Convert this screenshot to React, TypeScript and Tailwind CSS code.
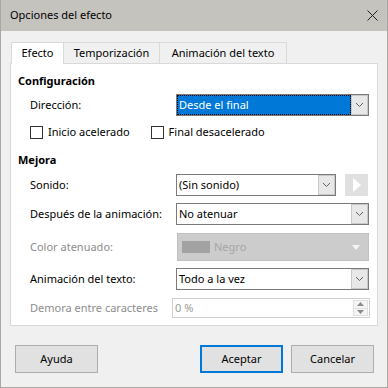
import React from "react";

const font = { fontFamily: '"Noto Sans", "Open Sans", sans-serif' };

const Chevron = () => (
  <svg width="9" height="6" viewBox="0 0 9 6" className="block">
    <path d="M1 1 L4.5 4.5 L8 1" fill="none" stroke="#606060" strokeWidth="1" />
  </svg>
);

const DropButton = () => (
  <div className="flex h-full w-[17px] shrink-0 items-center justify-center border border-[#c8c8c8] bg-[#e8e8e8]">
    <Chevron />
  </div>
);

const Select = ({ value, className = "" }: { value: string; className?: string }) => (
  <div className={`flex h-[22px] items-stretch border border-[#7a7a7a] bg-white ${className}`}>
    <div className="flex flex-1 items-center pl-[2px] text-[11px] text-black">{value}</div>
    <DropButton />
  </div>
);

const Checkbox = ({ label }: { label: string }) => (
  <div className="flex items-center gap-[5px]">
    <div className="h-[13px] w-[13px] border border-[#333] bg-white" />
    <span className="text-[11px] text-black">{label}</span>
  </div>
);

const Row = ({ label, disabled, children }: { label: string; disabled?: boolean; children: React.ReactNode }) => (
  <div className="flex items-center pl-[12px]">
    <div className={`w-[146px] shrink-0 text-[11px] ${disabled ? "text-[#8d8d8d]" : "text-black"}`}>{label}</div>
    {children}
  </div>
);

export default function App() {
  return (
    <div className="flex h-[388px] w-[388px] flex-col border-x border-b border-[#a9a7a4] bg-[#f0f0f0]" style={font}>
      {/* title bar */}
      <div className="flex h-[31px] shrink-0 items-center justify-between bg-[#c5c3be] pl-[9px] pr-[9px]">
        <span className="text-[11px] text-black">Opciones del efecto</span>
        <svg width="11" height="11" viewBox="0 0 11 11">
          <path d="M0.5 0.5 L10.5 10.5 M10.5 0.5 L0.5 10.5" stroke="#222" strokeWidth="1" />
        </svg>
      </div>

      {/* tabs */}
      <div className="ml-[10px] mt-[11px] flex h-[21px] items-stretch">
        <div className="relative z-10 flex h-[22px] w-[53px] items-center justify-center border-x border-t border-[#d9d9d9] bg-white text-[11px] text-black">
          Efecto
        </div>
        <div className="flex w-[96px] items-center justify-center border-r border-t border-[#d9d9d9] bg-[#f0f0f0] text-[11px] text-black">
          Temporización
        </div>
        <div className="flex w-[127px] items-center justify-center border-r border-t border-[#d9d9d9] bg-[#f0f0f0] text-[11px] text-black">
          Animación del texto
        </div>
      </div>

      {/* panel */}
      <div className="ml-[9px] w-[368px] border border-[#d9d9d9] bg-white pb-[7px] pl-[7px] pr-[7px] pt-[9px]">
        <div className="h-4 text-[11px] font-bold leading-4 text-black">Configuración</div>

        <div className="mt-[5px]">
          <Row label="Dirección:">
            <div className="flex h-[22px] w-[193px] items-stretch border border-[#7a7a7a] bg-white">
              <div className="flex flex-1 items-center border border-dotted border-black bg-[#0078d7] pl-px text-[11px] text-white">
                Desde el final
              </div>
              <DropButton />
            </div>
          </Row>
        </div>

        <div className="mt-[8px] flex h-4 items-center gap-[21px] pl-[12px]">
          <Checkbox label="Inicio acelerado" />
          <Checkbox label="Final desacelerado" />
        </div>

        <div className="mt-[12px] h-4 text-[11px] font-bold leading-4 text-black">Mejora</div>

        <div className="mt-[6px]">
          <Row label="Sonido:">
            <Select value="(Sin sonido)" className="w-[160px]" />
            <div className="ml-[9px] flex h-[22px] w-[23px] items-center justify-center bg-[#e0e0e0]">
              <svg width="9" height="14" viewBox="0 0 9 14">
                <path d="M1 0 L9 7 L1 14 Z" fill="#ffffff" />
              </svg>
            </div>
          </Row>
        </div>

        <div className="mt-[7px]">
          <Row label="Después de la animación:">
            <Select value="No atenuar" className="w-[193px]" />
          </Row>
        </div>

        <div className="mt-[8px]">
          <Row label="Color atenuado:" disabled>
            <div className="ml-px flex h-[28px] w-[192px] items-center border border-[#c2c2c2] bg-[#cccccc] pl-[4px] pr-[8px]">
              <div className="h-[12px] w-[28px] bg-[#a2a2a2]" />
              <span className="ml-[4px] flex-1 text-[11px] text-[#a6a6a6]">Negro</span>
              <svg width="8" height="5" viewBox="0 0 8 5">
                <path d="M0 0 L8 0 L4 5 Z" fill="#f4f4f4" />
              </svg>
            </div>
          </Row>
        </div>

        <div className="mt-[7px]">
          <Row label="Animación del texto:">
            <Select value="Todo a la vez" className="w-[193px]" />
          </Row>
        </div>

        <div className="mt-[8px] flex items-center pl-[12px]">
          <div className="flex-1 text-[11px] text-[#8d8d8d]">Demora entre caracteres</div>
          <div className="flex h-[20px] w-[198px] items-center border border-[#d0d0d0] bg-white pl-[2px] pr-px">
            <span className="flex-1 text-[11px] text-[#9a9a9a]">0 %</span>
            <div className="flex h-[16px] w-[15px] flex-col border border-[#e0e0e0] bg-[#f4f4f4]">
              <div className="flex flex-1 items-center justify-center border-b border-[#e0e0e0]">
                <svg width="7" height="4" viewBox="0 0 7 4"><path d="M0 4 L7 4 L3.5 0 Z" fill="#8a8a8a" /></svg>
              </div>
              <div className="flex flex-1 items-center justify-center">
                <svg width="7" height="4" viewBox="0 0 7 4"><path d="M0 0 L7 0 L3.5 4 Z" fill="#8a8a8a" /></svg>
              </div>
            </div>
          </div>
        </div>
      </div>

      {/* buttons */}
      <div className="mt-[19px] flex items-center pl-[14px] pr-[13px]">
        <button className="h-[28px] w-[83px] border border-[#adadad] bg-[#e1e1e1] text-[11px] text-black">Ayuda</button>
        <div className="flex-1" />
        <button className="h-[28px] w-[83px] border-2 border-[#0078d7] bg-[#e1e1e1] text-[11px] text-black">Aceptar</button>
        <button className="ml-[8px] h-[28px] w-[83px] border border-[#adadad] bg-[#e1e1e1] text-[11px] text-black">Cancelar</button>
      </div>
    </div>
  );
}
